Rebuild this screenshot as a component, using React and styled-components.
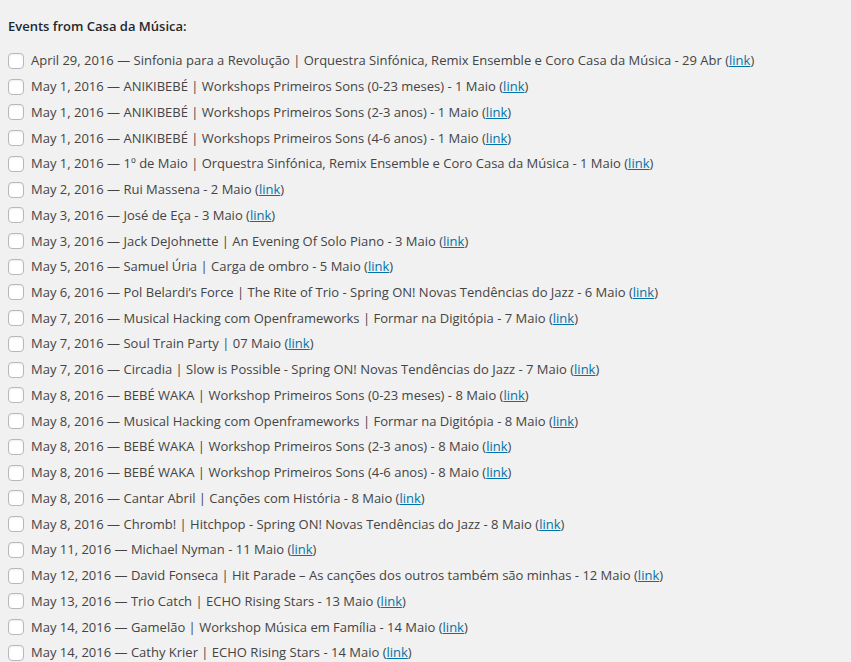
import React from 'react';
import styled, { createGlobalStyle } from 'styled-components';

const GlobalStyle = createGlobalStyle`
  html, body {
    margin: 0;
    padding: 0;
    background: #f1f1f1;
  }
  body {
    font-family: 'Open Sans', 'Noto Sans', sans-serif;
    font-size: 13px;
    color: #444;
  }
`;

const Wrapper = styled.div`
  padding: 16px 8px 0 8px;
`;

const Title = styled.div`
  font-weight: 600;
  color: #23282d;
  line-height: 20px;
  margin-bottom: 12px;
`;

const List = styled.ul`
  list-style: none;
  margin: 0;
  padding: 0;
`;

const Row = styled.li`
  display: flex;
  align-items: center;
  height: 25.74px;
  white-space: nowrap;
`;

const Check = styled.span`
  flex: none;
  width: 14px;
  height: 14px;
  border: 1px solid #b4b9be;
  border-radius: 4px;
  background: #fff;
  box-shadow: inset 0 1px 2px rgba(0, 0, 0, 0.07);
  margin-right: 7px;
`;

const Label = styled.span`
  line-height: 19px;
`;

const Link = styled.a`
  color: #0073aa;
  text-decoration: underline;
`;

const events = [
  'April 29, 2016 — Sinfonia para a Revolução | Orquestra Sinfónica, Remix Ensemble e Coro Casa da Música - 29 Abr',
  'May 1, 2016 — ANIKIBEBÉ | Workshops Primeiros Sons (0-23 meses) - 1 Maio',
  'May 1, 2016 — ANIKIBEBÉ | Workshops Primeiros Sons (2-3 anos) - 1 Maio',
  'May 1, 2016 — ANIKIBEBÉ | Workshops Primeiros Sons (4-6 anos) - 1 Maio',
  'May 1, 2016 — 1º de Maio | Orquestra Sinfónica, Remix Ensemble e Coro Casa da Música - 1 Maio',
  'May 2, 2016 — Rui Massena - 2 Maio',
  'May 3, 2016 — José de Eça - 3 Maio',
  'May 3, 2016 — Jack DeJohnette | An Evening Of Solo Piano - 3 Maio',
  'May 5, 2016 — Samuel Úria | Carga de ombro - 5 Maio',
  'May 6, 2016 — Pol Belardi’s Force | The Rite of Trio - Spring ON! Novas Tendências do Jazz - 6 Maio',
  'May 7, 2016 — Musical Hacking com Openframeworks | Formar na Digitópia - 7 Maio',
  'May 7, 2016 — Soul Train Party | 07 Maio',
  'May 7, 2016 — Circadia | Slow is Possible - Spring ON! Novas Tendências do Jazz - 7 Maio',
  'May 8, 2016 — BEBÉ WAKA | Workshop Primeiros Sons (0-23 meses) - 8 Maio',
  'May 8, 2016 — Musical Hacking com Openframeworks | Formar na Digitópia - 8 Maio',
  'May 8, 2016 — BEBÉ WAKA | Workshop Primeiros Sons (2-3 anos) - 8 Maio',
  'May 8, 2016 — BEBÉ WAKA | Workshop Primeiros Sons (4-6 anos) - 8 Maio',
  'May 8, 2016 — Cantar Abril | Canções com História - 8 Maio',
  'May 8, 2016 — Chromb! | Hitchpop - Spring ON! Novas Tendências do Jazz - 8 Maio',
  'May 11, 2016 — Michael Nyman - 11 Maio',
  'May 12, 2016 — David Fonseca | Hit Parade – As canções dos outros também são minhas - 12 Maio',
  'May 13, 2016 — Trio Catch | ECHO Rising Stars - 13 Maio',
  'May 14, 2016 — Gamelão | Workshop Música em Família - 14 Maio',
  'May 14, 2016 — Cathy Krier | ECHO Rising Stars - 14 Maio',
];

const App = () => (
  <>
    <GlobalStyle />
    <Wrapper>
      <Title>Events from Casa da Música:</Title>
      <List>
        {events.map((text, i) => (
          <Row key={i}>
            <Check />
            <Label>
              {text} (<Link href="#">link</Link>)
            </Label>
          </Row>
        ))}
      </List>
    </Wrapper>
  </>
);

export default App;
